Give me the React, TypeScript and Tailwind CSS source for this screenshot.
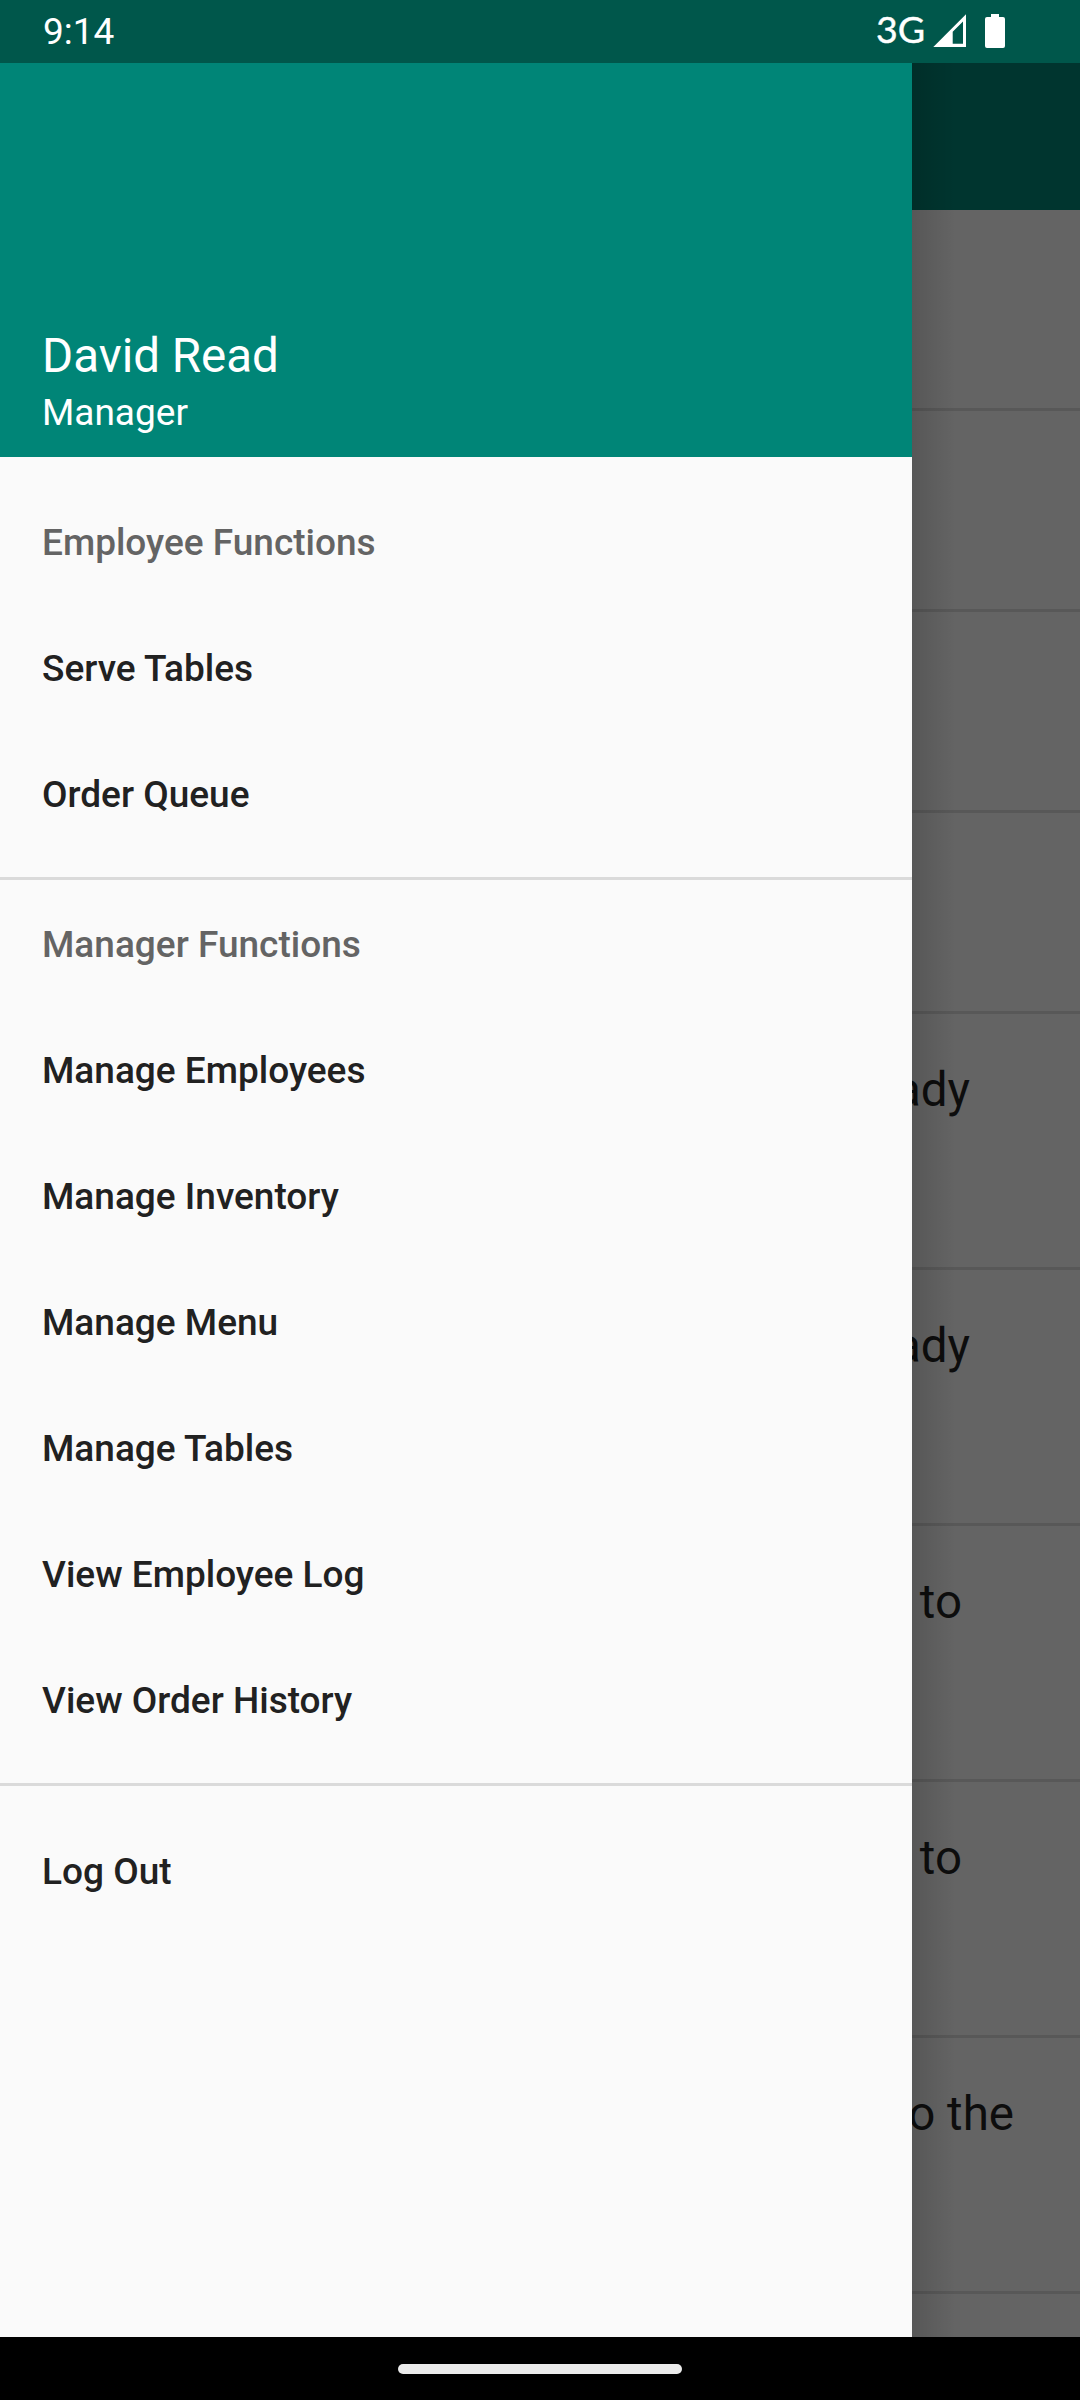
const employeeItems = ["Serve Tables", "Order Queue"];

const managerItems = [
  "Manage Employees",
  "Manage Inventory",
  "Manage Menu",
  "Manage Tables",
  "View Employee Log",
  "View Order History",
];

function StatusBar() {
  return (
    <header className="flex h-[63px] shrink-0 items-start justify-between bg-[#00574b] pl-[43px] text-white">
      <span className="pt-[10px] text-[37px] leading-[43px]">9:14</span>
      <div className="flex">
        <span className="w-[56px] pt-[7px] font-[Lato] text-[37.5px] leading-[44px] [-webkit-text-stroke:0.4px_white]">3G</span>
        <svg width="148" height="63" viewBox="932 0 148 63" fill="#fff">
          <path fillRule="evenodd" d="M933.3 47L966 14.3V47ZM952.7 31.7V43.8H963V21.6Z" />
          <path d="M991 14H999V17H1003Q1005 17 1005 19V46Q1005 48 1003 48H987Q985 48 985 46V19Q985 17 987 17H991Z" />
        </svg>
      </div>
    </header>
  );
}

function Item({ label, muted = false }: { label: string; muted?: boolean }) {
  return (
    <div
      className={`flex h-[126px] items-center pl-[42px] text-[37px] leading-[43px] font-medium ${
        muted ? "text-[#646464]" : "text-[#212121]"
      }`}
    >
      {label}
    </div>
  );
}

function Drawer() {
  return (
    <aside className="flex w-[912px] shrink-0 flex-col bg-[#fafafa]">
      <div className="flex h-[394px] flex-col justify-end bg-[#008577] pb-[23px] pl-[42px] text-white">
        <div className="text-[47.5px] leading-[56px]">David Read</div>
        <div className="mt-[7px] text-[37px] leading-[43px]">Manager</div>
      </div>
      <nav className="flex flex-col pt-[22px]">
        <Item label="Employee Functions" muted />
        {employeeItems.map((label) => (
          <Item key={label} label={label} />
        ))}
        <div className="mt-[20px] mb-px h-[3px] bg-[#dadada]" />
        <Item label="Manager Functions" muted />
        {managerItems.map((label) => (
          <Item key={label} label={label} />
        ))}
        <div className="mt-[20px] mb-[22px] h-[3px] bg-[#dadada]" />
        <Item label="Log Out" />
      </nav>
    </aside>
  );
}

const emptyRows = ["row-1", "row-2", "row-3", "row-4"];

const notices = [
  { text: "ady", pad: "pr-[110px]" },
  { text: "ady", pad: "pr-[110px]" },
  { text: "to", pad: "pr-[118px]" },
  { text: "to", pad: "pr-[118px]" },
  { text: "o the", pad: "pr-[66px]" },
];

function DimmedScreen() {
  return (
    <main className="relative flex min-w-0 flex-1 flex-col overflow-hidden bg-[#646464] text-[47.5px] leading-[56px] text-[#0d0d0d]">
      <div className="h-[147px] shrink-0 bg-[#00352f]" />
      {emptyRows.map((id) => (
        <div key={id} className="h-[201px] shrink-0 border-b-[3px] border-[#585858]" />
      ))}
      {notices.map((n, i) => (
        <div
          key={i}
          className={`flex h-[256px] shrink-0 justify-end border-b-[3px] border-[#585858] pt-[48px] whitespace-nowrap ${n.pad}`}
        >
          {n.text}
        </div>
      ))}
      <div className="absolute inset-y-0 left-0 w-[44px] bg-linear-to-r from-black/13 to-transparent" />
    </main>
  );
}

export default function App() {
  return (
    <div className="flex h-[2400px] w-[1080px] flex-col overflow-hidden bg-black font-[Roboto,sans-serif]">
      <StatusBar />
      <div className="flex h-[2274px] shrink-0">
        <Drawer />
        <DimmedScreen />
      </div>
      <footer className="flex flex-1 justify-center pt-[27px]">
        <div className="h-[10px] w-[284px] rounded-full bg-[#ebebeb]" />
      </footer>
    </div>
  );
}
